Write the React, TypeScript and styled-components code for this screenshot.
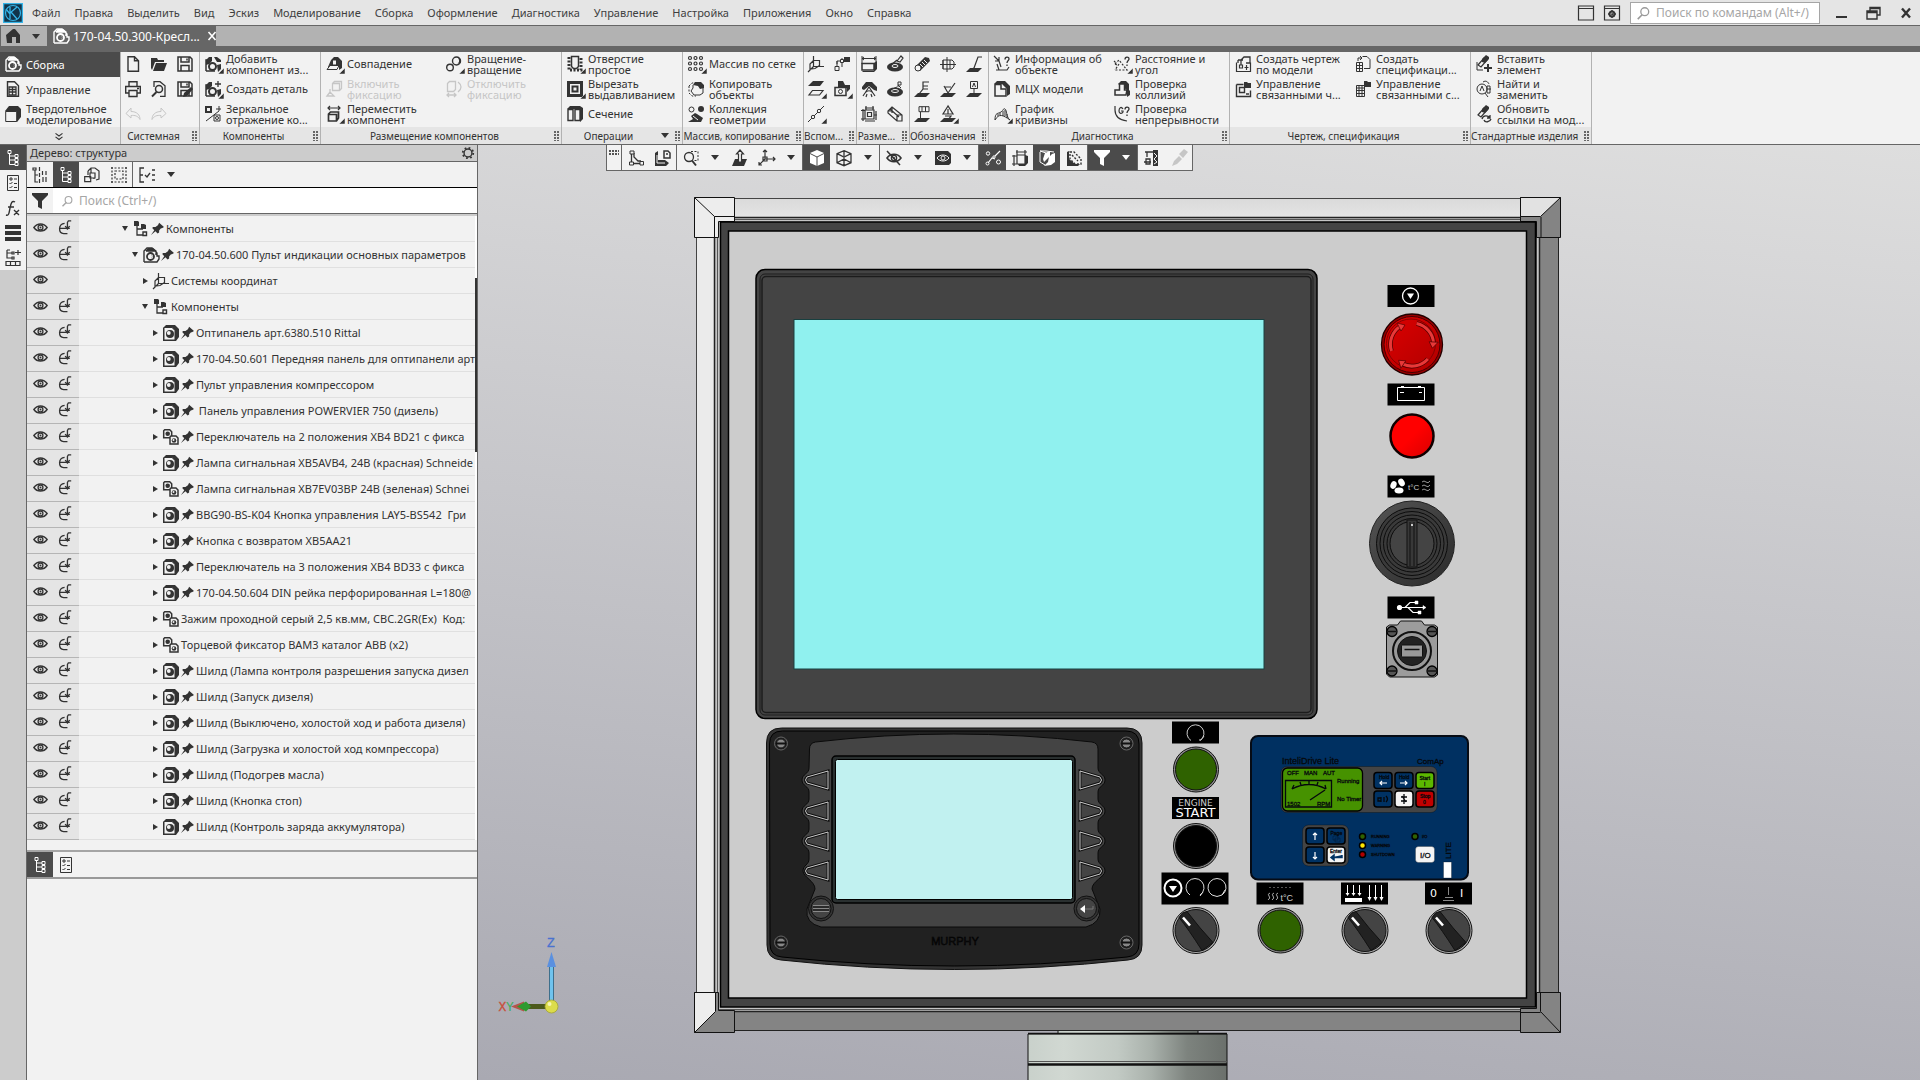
import React from "react";
import styled, { createGlobalStyle, css } from "styled-components";

const ink = "#333";
const line = "#666";
const face = "#f2f2f2";
const dark = "#4b4b4b";

const Global = createGlobalStyle`
  *, *::before, *::after { box-sizing: border-box; }
  body { margin: 0; overflow: hidden; }
  body, button, input { font-family: "Noto Sans", "Open Sans", sans-serif; font-size: 11px; color: ${ink}; }
  button { border: 0; padding: 0; background: none; cursor: pointer; }
  ul { list-style: none; margin: 0; padding: 0; }
  svg { display: block; flex: none; }
`;

/* ---------- icons, drawn on a 16 x 16 grid ---------- */

const F = { fill: "currentColor", stroke: "none" };
const W = { fill: "var(--bg, #f2f2f2)", stroke: "currentColor" };
const D = { strokeDasharray: "2 1.5" };
const plate = <path {...F} d="M4 12h12l-4 4H0z" />;
const partGlyph = (
  <>
    <path {...F} d="M0 3l3-3h9l4 4v8l-3 4H0z" />
    <path {...W} d="M1 2.500h8l3 3V15H1z" />
    <circle {...F} cx="7" cy="9" r="4" />
    <circle cx="5.800" cy="8" r="1.900" fill="var(--bg, #f2f2f2)" stroke="none" />
  </>
);
const asmGlyph = (
  <>
    <path d="M1 15V4l3-3h5l4 3v4M1 15h13l2-3v-3h-2V6l-2-2H3" strokeWidth="1.400" />
    <circle cx="7.500" cy="9.500" r="3.500" strokeWidth="1.800" />
    <path {...F} d="M8 7a3 3 0 0 1 0 5 4 4 0 0 0 0-5zM2 4l3-3h5l3 3z" />
  </>
);
const addGlyph = (
  <>
    <path d="M1 15V4h3M1 15h9" strokeWidth="1.500" />
    <path {...F} d="M1 4l3-3h3v4l-3 3-3 1zM12 9l4-1v5l-3 3z" />
    <circle cx="7.500" cy="10.500" r="3.500" strokeWidth="2" />
  </>
);
const treeGlyph = (
  <>
    <path d="M4.500 2v12.500H10M4.500 6H10M4.500 10H10" />
    <path {...W} d="M3 .5h3v3H3zM10 4.500h3v3h-3zM10 8.500h3v3h-3zM10 12.500h3v3h-3z" />
  </>
);
const listGlyph = (
  <>
    <path d="M2.500.5h11v15h-11z" />
    <path d="M5 3h2v2H5zM9 4h3M4.500 8l1 1 2-2M9 8.500h3M4.500 12l1 1 2-2M9 12.500h3" />
  </>
);
const eye = (
  <>
    <path d="M1 8c3.500-5 10.500-5 14 0-3.500 5-10.500 5-14 0z" strokeWidth="1.600" />
    <circle cx="8" cy="8" r="2.600" strokeWidth="1.400" />
    <circle {...F} cx="8" cy="8" r="1" />
  </>
);
const funnel = <path {...F} d="M0 0h16v2l-6 6v8l-4-2V8L0 2z" />;
const sheet = <path d="M7.500.5H12l3 3v9H9" />;
const table = <path d="M1.500 6.500h6v9h-6zM1.500 9.500h6M1.500 12.500h6M4.500 6.500v9" />;
const floppy = <path d="M1 1h12l2 2v12H1zM4 1v5h8V1M4 15V9.500h8V15M10 2.500v2" strokeWidth="1.500" />;
const undo = <path d="M6 2L1 7.500 6 12V9.500c4-.5 7 .5 9 4C15 9 12 5.500 6 5.500z" />;
const cone = (
  <>
    {plate}
    <path d="M6 13l2-1 4-11h4" strokeWidth="1.200" />
  </>
);
const q = <path d="M11 3.500C11 .5 15 .5 15 3c0 1.500-2 1.500-2 4M13 8.500v1.500" strokeWidth="1.300" />;
const bolt = (
  <>
    <path d="M2 9l6-7 3 2-6 7z" strokeWidth="1.200" />
    <path {...F} d="M6 3l4-4 3 2v2l-4 4-3-1z" />
  </>
);

const glyphs: Record<string, React.ReactNode> = {
  asm: asmGlyph,
  part: partGlyph,
  parts: (
    <>
      <path {...W} strokeWidth="1.500" d="M.7 1.700l1-1h5l2 2v6h-8z" />
      <circle {...F} cx="4.700" cy="4.700" r="2.300" />
      <path {...W} strokeWidth="1.500" d="M7 8l1-1h5l2 2v6H7z" />
      <circle {...F} cx="11" cy="11.500" r="2.300" />
      <circle cx="10.500" cy="11" r="1" fill="#f2f2f2" stroke="none" />
    </>
  ),
  doc: (
    <>
      <path d="M2.500.7h7l4 4v10.600h-11z" strokeWidth="1.400" />
      <path d="M4 6h7v8H4zM4 8.500h7M4 11h7M7.500 6v8" strokeWidth="1.300" />
    </>
  ),
  solid: (
    <>
      <path {...F} d="M0 5l4-5h9l3 3v8l-4 5z" />
      <path {...W} d="M.7 5.500h11v10H.7z" />
    </>
  ),
  newdoc: <path d="M3 .7h6.500l4 4v10.600H3zM9.500.7v4h4" strokeWidth="1.400" />,
  open: <path {...F} d="M0 2h6l1 2h6v2H4L1 14 0 12zM5 7h11l-3 8H2z" />,
  save: floppy,
  print: <path d="M4 5.500V.7h8v4.800M4 12H.7V5.500h14.600V12H12M4 9.500h8v6H4zM12 7.500h2" strokeWidth="1.400" />,
  preview: (
    <>
      <path d="M3 6V.7h6l5 4v10.600H9" strokeWidth="1.300" />
      <circle cx="8" cy="8" r="3.500" strokeWidth="1.500" />
      <path d="M5.500 11L1 15.500" strokeWidth="2" />
    </>
  ),
  saveas: (
    <>
      {floppy}
      <path {...F} d="M7 12l7-6 2 2-6 7-4 1z" />
    </>
  ),
  undo,
  redo: <g transform="matrix(-1 0 0 1 16 0)">{undo}</g>,
  add: (
    <>
      {addGlyph}
      <path {...F} d="M9 1h3l4 3v2h-4z" />
    </>
  ),
  create: (
    <>
      {addGlyph}
      <path d="M13 0v6M10 3h6" strokeWidth="1.300" />
    </>
  ),
  mirror: (
    <>
      <path d="M1 1h5v5H1z" strokeWidth="2" />
      <path d="M1 15L14 5M14 0v5M11 3h5M9 9h6v6H9z" />
      <circle cx="12" cy="12" r="1.500" />
    </>
  ),
  coincide: (
    <>
      <path {...F} d="M5 4l3-3h4l4 4v7l-3 2v-3H2z" />
      <path {...W} d="M1 13.500l3-4h9l-2 4zM6.500 4h4v5h-4z" />
    </>
  ),
  rotate: (
    <>
      <circle cx="10.500" cy="5" r="4" strokeWidth="1.400" />
      <circle cx="4" cy="11.500" r="3.300" strokeWidth="1.400" />
      <path {...F} d="M10.500 1a4 4 0 0 1 4 6l-3 1a4 4 0 0 0-1-7z" />
    </>
  ),
  fixon: <path d="M6.500 2.500l2-2h7v7l-2 2h-7zM6.500 2.500h7v7M4 8v4M1 15l3-4 4 4z" strokeWidth="1.300" />,
  fixoff: <path d="M1.500 2.500l2-2h6v8l-2 2h-6zM12 1c4 3 4 7 0 10M1 14h9M3 12l-2 2 2 2M8 12l2 2-2 2" strokeWidth="1.300" />,
  move: (
    <>
      <path d="M2 2h12M4 0L2 2l2 2M12 0l2 2-2 2" strokeWidth="1.200" />
      <path d="M2.500 8l2-2h8v6l-2 3h-8zM2.500 8.500h8V15" strokeWidth="1.700" />
    </>
  ),
  hole: (
    <>
      <path {...D} strokeWidth="3" d="M2 1v13h12V1" />
      <path {...W} d="M4.500.5h7v10l-2 2h-3l-2-2z" strokeWidth="1.500" />
    </>
  ),
  cut: (
    <>
      <path d="M1.500 1.500h13v13h-13z" strokeWidth="3" />
      <path d="M5.500 5.500h5v5h-5z" strokeWidth="2" />
    </>
  ),
  section: (
    <>
      <path {...F} d="M0 3l3-3h10l3 2v11l-3 3V3z" />
      <path {...W} strokeWidth="1.400" d="M1 3.500h5v11H1zM8 3.500h5v11H8z" />
    </>
  ),
  grid: (
    <g strokeWidth="1.200">
      {[2, 7.500, 13].flatMap((y) => [2, 7.500, 13].map((x) => <circle key={`${x}-${y}`} cx={x} cy={y} r="1.500" />))}
    </g>
  ),
  copy: (
    <>
      <path {...D} d="M1 5l3-3h7v3M1 5v7l3 3h4" />
      <path d="M5 4v3l-2 3 3 4h6l3-2V4" />
      <path {...F} d="M5 4l2-3h6l3 3v3l-4 1-2-3z" />
    </>
  ),
  collect: (
    <>
      <circle cx="3.500" cy="3.500" r="2.500" />
      <circle {...F} cx="13" cy="3" r="3" />
      <path {...F} d="M0 16l5-3-2-3 4-3 2 1 6 4-2 4z" />
      <path d="M5 10l5 4" stroke="#f2f2f2" />
    </>
  ),
  csys: <path d="M5.500 0v10.500H16M0 16l5.500-5.500M5.500 4.500h6v6M5.500 4.500L2 8v5l5-.5 4.500-3" strokeWidth="1.200" />,
  points: (
    <>
      <path d="M3 12V5h9M3 8V5M8 2v9" />
      <path {...F} d="M10 1h6v5h-6z" />
      <path {...W} d="M1 10.500h4v4H1zM6.500 3.500h3v3h-3z" />
    </>
  ),
  planes: (
    <>
      <path {...F} d="M5 0h11l-4 5H0z" />
      <path d="M4.500 9.500H15L11.500 14H1z" strokeWidth="1.200" />
    </>
  ),
  camera: (
    <>
      <path {...F} d="M4 0h5l2 4h5v4l-3 3V7H4z" />
      <path {...W} strokeWidth="1.500" d="M1 6.500h11v8H1z" />
      <circle cx="6.500" cy="10.500" r="2" />
    </>
  ),
  axis: (
    <>
      <path d="M0 16L16 0" />
      <circle {...W} cx="5" cy="11" r="1.700" />
      <circle {...W} cx="11" cy="5" r="1.700" />
    </>
  ),
  dimline: (
    <>
      <path d="M1 0v8M15 0v8M1 2.500h14M3 1L1 2.500 3 4M13 1l2 1.500L13 4" />
      <path {...W} strokeWidth="1.500" d="M1 7.500h12V14H1z" />
      <path {...F} d="M13 7l3-2v8l-3 3H2l-1-1h12z" />
    </>
  ),
  dimdia: (
    <>
      <ellipse {...F} cx="8" cy="11" rx="8" ry="4.500" />
      <ellipse cx="8" cy="10" rx="3" ry="1.500" stroke="#f2f2f2" />
      <path d="M4 9l6-5M10 5l4-5 2 2-3 4z" strokeWidth="1.200" />
    </>
  ),
  dimrad: (
    <>
      <ellipse {...F} cx="8" cy="11" rx="8" ry="4.500" />
      <ellipse cx="8" cy="10" rx="3.500" ry="1.500" stroke="#f2f2f2" />
      <path d="M3 9l7-3M11 6V1h3v3h-3l3 3" />
    </>
  ),
  dimang: (
    <>
      <path {...F} d="M1 6l4-5h6l5 5v4l-3-1-5-4-5 4-2-1z" />
      <path d="M8 6l-6 9M8 6l6 9M4 12c2-3 6-3 8 0M5 16l1-3M11 16l-1-3" strokeWidth="1.200" />
    </>
  ),
  dimall: <path d="M4 4h9v9H4zM6.500 6.500h4v4h-4zM0 4.500h4M0 13h4M2 3v12M5 0v4M12 0v4M4 2h9M15 5v9M13 9h3M4 15h10" strokeWidth="1.200" />,
  dimobl: <path d="M5 1l10 8v6h-5L1 7V5zM1 5h4M10 15V9h5M5 1v6M3 3l9 8" strokeWidth="1.200" />,
  thread: (
    <>
      <path {...F} d="M1 11L11 1l4 1 1 3L6 15l-4-1z" />
      <path d="M4 10l3 3M6 8l3 3M8 6l3 3M10 4l3 3" stroke="#f2f2f2" />
      <circle {...W} cx="4" cy="12" r="3" />
    </>
  ),
  cyl: <path d="M3 4h9l2 2v5l-2 2H3zM3 4v9M0 8.500h16M7 1v15M10 4v9" />,
  rough: cone,
  base: (
    <>
      {plate}
      <path d="M5 13l4-5V1h6M9 5h5M9 8h5" strokeWidth="1.200" />
    </>
  ),
  check: (
    <>
      {plate}
      <path d="M4 5l4 7 7-10M5 6h6" strokeWidth="1.200" />
    </>
  ),
  datum: (
    <>
      {plate}
      <path {...W} d="M4.500.5h7v7h-7z" />
      <path d="M6.500 6L8 2l1.500 4M8 8v5" />
    </>
  ),
  tol: (
    <>
      {plate}
      <path {...W} d="M5 .7h10v5H5zM8 .7v5M11.500.7v5M6.500 6v8" />
    </>
  ),
  weld: (
    <>
      {plate}
      <path d="M8 0L3 8h10zM8 3v5M5 10h6l-3 4" strokeWidth="1.200" />
    </>
  ),
  info: (
    <>
      {q}
      <path d="M0 0l5 5M5 1v4H1M3 8l2 6H2M3 14h10l2-3M5 5l2 6" strokeWidth="1.200" />
    </>
  ),
  mass: (
    <>
      <path {...F} d="M0 3l3-3h8l5 5v8l-3 2V8L8 3z" />
      <path {...W} strokeWidth="1.500" d="M1 3.500h6V8h5v7H1z" />
    </>
  ),
  curve: (
    <>
      <path d="M1 14C1 6 4 8 7 6s2-4 4-3 1 8 5 11M1 14c4-7 8-5 15 0M4 8v2M6 7v2M9 5v5M11 4v6M13 8v4" />
    </>
  ),
  dist: (
    <>
      {q}
      <path d="M1 8l4-4 8 10H1M5 8l-4 6M1 8l2 1M0 5l2 2" {...D} strokeWidth="1.200" />
    </>
  ),
  collide: (
    <>
      <path {...F} d="M4 3l3-3h5l3 3v6l1 1v4l-3 2V9z" />
      <path {...W} strokeWidth="1.500" d="M5.500 3h5v6h2.500l-1 5H1V9h4.500z" />
    </>
  ),
  cont: (
    <>
      {q}
      <path d="M1 0v4c0 6 4 10 12 11M9 3C7 0 5 2 5 5s3 3 4 1V5H7" strokeWidth="1.200" />
    </>
  ),
  draw: (
    <>
      <path d="M1.500 6.500v9h14v-9M4.500 9h3v3h-3zM9.500 11.500h4M11.500 9v5" strokeWidth="1.200" />
      <path d="M6 9V4l3-3h6v6h-4M3 4h5M3 4v3" strokeWidth="1.300" />
    </>
  ),
  drawm: (
    <>
      <path d="M1.500 3.500v12h14v-6M1.500 3.500h7M4.500 6.500h5v5h-5zM11 13h3" strokeWidth="1.400" />
      <path {...F} d="M9 1h3l1 1h3v5H9z" />
    </>
  ),
  spec: (
    <>
      {table}
      {sheet}
      <path d="M3 5V2h4M5 0l2 2-2 2" />
    </>
  ),
  specm: (
    <>
      <path d="M1.500 4.500h8v11h-8zM1.500 7h8M1.500 9.500h8M1.500 12.500h8M4 4.500v11M7 4.500v11" />
      <path {...F} d="M9 0h3l1 1h3v5H9z" />
    </>
  ),
  insert: (
    <>
      {bolt}
      <path d="M12 8v8M8 12h8" strokeWidth="2" />
      <path d="M1 6v8h6" />
    </>
  ),
  find: (
    <>
      <circle cx="6" cy="8" r="5" />
      <path d="M4 10l2-5 2 5M11 12V5h3v7h-3M11 8h4M9 12l3 4M7 1c3-2 5 0 6 2" />
    </>
  ),
  update: (
    <>
      {bolt}
      <path d="M6 13c1-4 6-4 8-1M14 9v3h-3M15 13c-1 3-6 4-7 1" strokeWidth="1.300" />
    </>
  ),
  tree: treeGlyph,
  list: listGlyph,
  menu: <path {...F} d="M0 0h16v4H0zM0 6h16v4H0zM0 12h16v4H0z" />,
  treeadd: <path d="M2 0v8h5M2 3h5M2 0h3M7 2h2v2H7zM7 7h2v2H7zM13 0v5M10 2.500h6M1 11.500h14v4H1zM5.500 11.500v4M10.500 11.500v4" strokeWidth="1.200" />,
  numtree: <path d="M3 3v12h3M3 8h3M1 1h3v2H1zM7.500 0v4M10.500 4v4M14 4v4M7.500 6v4M11 10v5M14 10v5M7.500 12v4" strokeWidth="1.200" />,
  clips: (
    <>
      <path d="M4 4l3-3h4l4 3v8l-3 1M4 4v4M7 1v5l3 2v4" strokeWidth="1.200" />
      <path {...W} strokeWidth="1.200" d="M.7 9.700h6v5h-6zM6 6h5v5H6z" />
    </>
  ),
  marquee: (
    <>
      <path {...D} strokeWidth="1.200" d="M0 1h16M0 15h16M1 0v16M15 0v16M4 4h8v8H4z" />
    </>
  ),
  checks: <path d="M4 1H1v14h3M1 8h3M6 8l2 2 3-4M13 3h3M13 8h3M13 13h3M4 1h1M4 15h1" strokeWidth="1.300" />,
  include: <path d="M6 3.500C-1 4-1 14 5 14.500h4M1 9h10.500M9 10.500V6M6.500 6.500L9 9l2.500-2.500M9 6V2.500L10 1h3" strokeWidth="1.400" />,
  eye,
  comps: (
    <>
      <path d="M4 4v10h6M4 8h6" strokeWidth="1.300" />
      <path {...F} d="M1 0h4l1 1v4H1zM8 3h3l2 1v4H8z" />
      <path {...W} strokeWidth="1.400" d="M10 11h3.500v3.500H10z" />
    </>
  ),
  pin: <path {...F} d="M10 1l6 5-2 1.500-2 .5-2 2.500 0 2.500-2 1-2.500-2.500L0 16l4-6-2.500-2.500 1-1.500h3L8.500 4z" />,
  ucs: (
    <>
      <path d="M3.500 3v10.500H13M6 3v4l4 4h3" strokeWidth="1.300" />
      <path {...W} d="M2 1h4v3H2zM1.500 12h4v3h-4zM12 11.500h3.500V15H12z" />
    </>
  ),
  ucspart: (
    <>
      <path {...F} d="M0 3l3-2v9h7l4 3-3 3H0z" />
      <path d="M9 1h4l2 2v5H9zM11 4h2" strokeWidth="1.500" />
      <path d="M2 5v8h8" stroke="#f2f2f2" />
    </>
  ),
  zoom: (
    <>
      <circle cx="6" cy="7" r="4.500" strokeWidth="1.300" />
      <path d="M9 10.500l4 5" strokeWidth="2" />
      <path {...D} d="M8 1.500h7v9h-4" />
    </>
  ),
  normal: (
    <>
      <path {...F} d="M3 9h12l-3 7H0z" />
      <path {...W} strokeWidth="1.200" d="M8 0l3.500 4h-2v8h-3V4h-2z" />
    </>
  ),
  triad: <path d="M6 0v9h10M6 9l-6 6M4 2l2-2 2 2M14 7l2 2-2 2M0 12v3h3M4 7h4v4H4z" strokeWidth="1.200" />,
  cube: (
    <>
      <path {...F} d="M8 0l7 3v10l-7 3-7-3V3z" />
      <path d="M1 3.500L8 7l7-3.500M8 7v9" stroke="#4b4b4b" />
    </>
  ),
  wire: <path d="M8 .7l7 3v9l-7 3-7-3v-9zM1 3.700L8 7l7-3.300M8 7v8.700M8 .7V6M1 12.700L8 9l7 3.700" strokeWidth="1.300" />,
  hide: (
    <>
      {eye}
      <path d="M1 1l13 14" strokeWidth="1.500" />
    </>
  ),
  eyebox: (
    <>
      <path {...F} d="M0 1h13l3 3v9l-2 2H0z" />
      <path d="M2 8c3-4 9-4 12 0-3 4-9 4-12 0z" stroke="#f2f2f2" />
      <circle cx="8" cy="8" r="2" stroke="#f2f2f2" />
    </>
  ),
  snaps: (
    <>
      <path d="M3 13l4-5 3 1M10 6l5-5" strokeWidth="1.200" />
      <circle cx="3" cy="3.500" r="1.700" />
      <circle cx="9" cy="7" r="1.200" />
      <circle cx="13.500" cy="12" r="2" />
      <circle cx="2.500" cy="13.500" r="1.500" />
    </>
  ),
  dimshow: (
    <>
      <path d="M5 5h8v9H5zM5 0v5M13 0v5M4 2h11M0 6h5M0 14h5M2 5v11" strokeWidth="1.200" />
      <path {...F} d="M13 5l3 1v7l-3 3H7l-1-2h7z" />
    </>
  ),
  shade: (
    <>
      <path {...F} d="M6 3l5-2v5l-6 6-1-3zM10 7l3-3 3-1v9l-4 3-7 1 4-4z" />
      <path d="M1 2v10l5 3M1 1l6 2M1 1h6l8 1" />
    </>
  ),
  shaded: (
    <>
      <path {...F} d="M1 2l2-1v8l6 5h5l-2 2H1z" />
      <path {...D} strokeWidth="1.400" d="M4 2h4l7 7v5H9L4 9zM6 5l6 6" />
    </>
  ),
  funnel,
  crane: (
    <>
      <path d="M1 2h9M3 2v5M2 9h4v5H2zM0 12h7" strokeWidth="1.300" />
      <path {...F} d="M9 0h5v16h-5z" />
      <path d="M10 3l3 3-3 3 3 3-3 2" stroke="#f2f2f2" />
    </>
  ),
  picker: <path {...F} d="M1 16l2-5 5-5 3 3-5 5zM8 4l5-5 4 3-5 6z" />,
  home: <path {...F} d="M0 7l7-6h2l5 6v8h-4V9H6v6H1z" />,
  win: <path d="M.5 1h15v14H.5zM.5 3.500h15" strokeWidth="1.200" />,
  wingear: (
    <>
      <path d="M.5 1h15v14H.5zM.5 3.500h15" strokeWidth="1.200" />
      <circle cx="8" cy="9" r="2.500" strokeWidth="2" />
      <path {...D} strokeWidth="1.500" d="M8 5v8M4 9h8" />
    </>
  ),
  gear: (
    <>
      <circle cx="8" cy="8" r="4.500" strokeWidth="1.600" />
      <circle cx="8" cy="8" r="6" strokeWidth="2" strokeDasharray="2 2.710" />
    </>
  ),
  search: (
    <>
      <circle cx="10" cy="6.500" r="4.500" strokeWidth="1.500" />
      <path d="M7 10l-5 5" strokeWidth="1.800" />
    </>
  ),
  more: <path d="M4 5l4 3 4-3M4 9l4 3 4-3" strokeWidth="1.300" />,
  minus: <path {...F} d="M2 11h11v2H2z" />,
  restore: <path d="M1 6h10v8H1zM1 7.500h10M4 6V2.500h10V10h-3M4 3.500h10" strokeWidth="1.400" />,
  close: <path d="M4 3.500l8 9M12 3.500l-8 9" strokeWidth="2.400" />,
  closetab: <path d="M4.500 4l7 8M11.500 4l-7 8" strokeWidth="1.600" />,
  fx: <path d="M1 15c3 1 3-2 4-7s2-8 5-6M3 7h6M9 10l5 5M14 10l-5 5" strokeWidth="1.400" />,
};

const Icon = ({ name, size = 16 }: { name: string; size?: number }) => (
  <svg width={size} height={size} viewBox="0 0 16 16" fill="none" stroke="currentColor" overflow="visible" aria-hidden>
    {glyphs[name]}
  </svg>
);

const ToolIcon = ({ name, more }: { name: string; more?: boolean }) => (
  <svg width={20} height={20} viewBox="0 0 20 20" fill="none" stroke="currentColor" aria-hidden>
    <g transform="translate(1 2)">{glyphs[name]}</g>
    {more && <path d="M20 14v6h-6z" fill="currentColor" stroke="#f2f2f2" strokeWidth=".5" />}
  </svg>
);

/* ---------- frame ---------- */

const Shell = styled.div`
  height: 100vh;
  display: flex;
  flex-direction: column;
  background: ${face};
`;

const MenuBar = styled.header`
  flex: none;
  height: 26px;
  display: flex;
  align-items: center;
  background: #e5e5e5;
  border-bottom: 1px solid ${line};
`;
const Menu = styled.nav`
  display: flex;
  gap: 14px;
  padding-left: 9px;
  button { color: #404040; white-space: nowrap; }
`;
const Logo = styled.svg`margin-left: 3px;`;
const Spacer = styled.div`flex: 1;`;
const WinTools = styled.div`
  display: flex;
  gap: 10px;
  margin-right: 10px;
`;
const CommandSearch = styled.label`
  width: 190px;
  height: 22px;
  display: flex;
  align-items: center;
  gap: 6px;
  padding-left: 5px;
  background: #fff;
  border: 1px solid #a5a5a5;
  color: #999;
`;
const SearchInput = styled.input`
  flex: 1;
  min-width: 0;
  border: 0;
  padding: 0;
  outline: 0;
  background: none;
  font-size: 12px;
  &::placeholder { color: #a6a6a6; opacity: 1; }
`;
const WinButtons = styled.div`
  display: flex;
  gap: 16px;
  padding: 0 6px 0 14px;
`;

const TabBar = styled.div`
  flex: none;
  height: 26px;
  display: flex;
  background: #b2b2b2;
  border-bottom: 6px solid ${line};
  border-left: 1px solid ${line};
`;
const HomeTab = styled.button`
  width: 46px;
  display: flex;
  align-items: center;
  gap: 10px;
  padding-left: 5px;
`;
const DocTab = styled.div`
  width: 169px;
  display: flex;
  align-items: center;
  gap: 4px;
  padding: 0 3px 0 6px;
  background: ${line};
  color: #fff;
  font-size: 12px;
  white-space: nowrap;
  button { color: #fff; margin-left: auto; }
`;
const Caret = styled.span`
  flex: none;
  width: 0;
  height: 0;
  border: 4px solid transparent;
  border-top: 5px solid currentColor;
  border-bottom: 0;
`;

/* ---------- ribbon ---------- */

const Ribbon = styled.div`
  flex: none;
  display: flex;
  background: ${face};
  border-bottom: 1px solid ${line};
`;
const Group = styled.section<{ $w: number }>`
  flex: 0 0 ${(p) => p.$w}px;
  min-width: 0;
  display: flex;
  flex-direction: column;
  border-right: 1px solid #b2b2b2;
`;
const GroupBody = styled.div<{ $col: number; $pad: number }>`
  display: grid;
  grid-template-rows: repeat(3, 25px);
  grid-auto-flow: column;
  grid-auto-columns: ${(p) => p.$col}px;
  padding-left: ${(p) => p.$pad}px;
`;
const GroupFoot = styled.footer`
  height: 17px;
  display: flex;
  align-items: center;
  justify-content: center;
  gap: 6px;
  padding-right: 2px;
  background: #e5e5e5;
  font-size: 10px;
  line-height: 16px;
  white-space: nowrap;
  > span:first-child { flex: 1; text-align: center; }
`;
const Grip = styled.i`
  width: 5px;
  height: 10px;
  background: radial-gradient(circle at 1px 1px, #666 1px, transparent 1px) 0 0 / 3px 3px;
`;
const Command = styled.button<{ $bare: boolean }>`
  display: flex;
  align-items: center;
  justify-content: ${(p) => (p.$bare ? "center" : "flex-start")};
  gap: 2px;
  padding-bottom: 2px;
  text-align: left;
  line-height: 11px;
  white-space: pre;
  &:disabled { color: #c6c6c6; cursor: default; }
`;
const ModeButton = styled.button<{ $on?: boolean }>`
  display: flex;
  align-items: center;
  gap: 5px;
  padding: 0 0 1px 5px;
  text-align: left;
  line-height: 11px;
  white-space: pre;
  ${(p) => p.$on && css`background: ${dark}; color: #fff; --bg: ${dark};`}
`;

type Cmd = [icon: string, text: string, flags?: string];
interface GroupDef { title: string; w: number; col: number; pad: number; cmds: Cmd[]; caret?: boolean }

const groups: GroupDef[] = [
  { title: "Системная", w: 79, col: 26, pad: 0, cmds: [
    ["newdoc", ""], ["print", ""], ["undo", "", "d"], ["open", ""], ["preview", ""], ["redo", "", "d"], ["save", ""], ["saveas", ""]] },
  { title: "Компоненты", w: 121, col: 116, pad: 4, cmds: [
    ["add", "Добавить\nкомпонент из...", "m"], ["create", "Создать деталь", "m"], ["mirror", "Зеркальное\nотражение ко..."]] },
  { title: "Размещение компонентов", w: 241, col: 120, pad: 4, cmds: [
    ["coincide", "Совпадение", "m"], ["fixon", "Включить\nфиксацию", "d"], ["move", "Переместить\nкомпонент", "m"],
    ["rotate", "Вращение-\nвращение", "m"], ["fixoff", "Отключить\nфиксацию", "d"]] },
  { title: "Операции", w: 121, col: 116, pad: 4, caret: true, cmds: [
    ["hole", "Отверстие\nпростое", "m"], ["cut", "Вырезать\nвыдавливанием", "m"], ["section", "Сечение"]] },
  { title: "Массив, копирование", w: 121, col: 116, pad: 4, cmds: [
    ["grid", "Массив по сетке", "m"], ["copy", "Копировать\nобъекты"], ["collect", "Коллекция\nгеометрии"]] },
  { title: "Вспом...", w: 53, col: 26, pad: 0, cmds: [
    ["csys", ""], ["planes", "", "m"], ["axis", "", "m"], ["points", ""], ["camera", "", "m"]] },
  { title: "Разме...", w: 53, col: 26, pad: 0, cmds: [
    ["dimline", ""], ["dimang", ""], ["dimall", ""], ["dimdia", ""], ["dimrad", ""], ["dimobl", ""]] },
  { title: "Обозначения", w: 79, col: 26, pad: 0, cmds: [
    ["thread", ""], ["base", ""], ["tol", ""], ["cyl", ""], ["check", ""], ["weld", "", "m"], ["rough", ""], ["datum", ""]] },
  { title: "Диагностика", w: 241, col: 120, pad: 4, cmds: [
    ["info", "Информация об\nобъекте"], ["mass", "МЦХ модели"], ["curve", "График\nкривизны", "m"],
    ["dist", "Расстояние и\nугол", "m"], ["collide", "Проверка\nколлизий"], ["cont", "Проверка\nнепрерывности"]] },
  { title: "Чертеж, спецификация", w: 241, col: 120, pad: 4, cmds: [
    ["draw", "Создать чертеж\nпо модели"], ["drawm", "Управление\nсвязанными ч..."], ["", ""],
    ["spec", "Создать\nспецификаци..."], ["specm", "Управление\nсвязанными с..."]] },
  { title: "Стандартные изделия", w: 121, col: 116, pad: 4, cmds: [
    ["insert", "Вставить\nэлемент"], ["find", "Найти и\nзаменить"], ["update", "Обновить\nссылки на мод..."]] },
];

const RibbonGroup = ({ g }: { g: GroupDef }) => (
  <Group $w={g.w} aria-label={g.title}>
    <GroupBody $col={g.col} $pad={g.pad}>
      {g.cmds.map(([icon, text, flags = ""], i) =>
        icon ? (
          <Command key={i} $bare={!text} disabled={flags.includes("d")} aria-label={text ? undefined : icon}>
            <ToolIcon name={icon} more={flags.includes("m")} />
            {text && <span>{text}</span>}
          </Command>
        ) : (
          <span key={i} />
        )
      )}
    </GroupBody>
    <GroupFoot>
      <span>{g.title}</span>
      {g.caret && <Caret />}
      <Grip />
    </GroupFoot>
  </Group>
);

/* ---------- side panel ---------- */

const Main = styled.main`
  flex: 1;
  min-height: 0;
  display: flex;
`;
const Rail = styled.nav`
  flex: 0 0 26px;
  background: #ccc;
`;
const Square = styled.button<{ $on?: boolean; $w?: number }>`
  width: ${(p) => p.$w ?? 26}px;
  height: 25px;
  display: flex;
  align-items: center;
  justify-content: center;
  background: ${(p) => (p.$on ? dark : face)};
  color: ${(p) => (p.$on ? "#fff" : ink)};
  --bg: ${(p) => (p.$on ? dark : face)};
  &:disabled { color: #c6c6c6; }
`;
const Panel = styled.aside`
  flex: 0 0 452px;
  min-width: 0;
  display: flex;
  flex-direction: column;
  border: solid ${line};
  border-width: 0 1px;
  background: ${face};
`;
const PanelHead = styled.div`
  height: 17px;
  display: flex;
  align-items: center;
  justify-content: space-between;
  padding: 0 2px 0 3px;
  background: #ccc;
  border-bottom: 1px solid ${line};
  line-height: 16px;
`;
const PanelTools = styled.div`
  height: 26px;
  display: flex;
  border-bottom: 1px solid #000;
  > :nth-child(5) { border-left: 1px solid ${line}; }
`;
const CaretCell = styled.button`
  width: 22px;
  display: flex;
  align-items: center;
  justify-content: center;
`;
const FilterRow = styled.div`
  height: 26px;
  display: flex;
  border-bottom: 1px solid ${line};
`;
const FilterInput = styled.label`
  flex: 1;
  display: flex;
  align-items: center;
  gap: 6px;
  padding-left: 8px;
  background: #fff;
  color: #a6a6a6;
`;
const TreeWrap = styled.div`
  display: flex;
  border-top: 2px solid #ccc;
`;
const Tree = styled.ul`
  flex: 1;
  min-width: 0;
`;
const Row = styled.li`
  height: 26px;
  display: flex;
`;
const Mark = styled.button`
  flex: 0 0 26px;
  display: flex;
  justify-content: center;
  padding-top: 4px;
  background: #e5e5e5;
  border-bottom: 1px solid #b5b5b5;
`;
const Node = styled.div<{ $level: number }>`
  flex: 1;
  min-width: 0;
  display: flex;
  align-items: center;
  gap: 2px;
  padding-left: ${(p) => 40 + p.$level * 10}px;
  border-bottom: 1px solid #e0e0e0;
  white-space: pre;
  overflow: hidden;
`;
const Twist = styled.button<{ $open?: boolean }>`
  flex: none;
  width: 12px;
  height: 16px;
  display: flex;
  align-items: center;
  justify-content: center;
  &::before {
    content: "";
    border: 3px solid transparent;
    ${(p) => (p.$open
      ? css`border-top: 5px solid ${ink}; border-bottom: 0;`
      : css`border-left: 5px solid ${ink}; border-right: 0;`)}
  }
`;
const Pin = styled.span`width: 13px;`;
const Scroll = styled.div`
  flex: 0 0 2px;
  padding-top: 62px;
  background: #fff;
  &::before { content: ""; display: block; height: 174px; background: ${ink}; }
`;
const Switcher = styled.div`
  margin-top: 10px;
  display: flex;
  border-top: 2px solid #a5a5a5;
  border-bottom: 2px solid #999;
`;

type TreeItem = [level: number, icon: string, pin: boolean, text: string, open?: boolean, noMark?: boolean];
const P = "part";
const tree: TreeItem[] = [
  [0, "comps", true, "Компоненты", true],
  [1, "asm", true, "170-04.50.600 Пульт индикации основных параметров", true],
  [2, "csys", false, "Системы координат", false, true],
  [2, "comps", false, "Компоненты", true],
  [3, P, true, "Оптипанель арт.6380.510 Rittal"],
  [3, P, true, "170-04.50.601 Передняя панель для оптипанели арт"],
  [3, P, true, "Пульт управления компрессором"],
  [3, P, true, " Панель управления POWERVIER 750 (дизель)"],
  [3, "parts", true, "Переключатель на 2 положения XB4 BD21 с фикса"],
  [3, P, true, "Лампа сигнальная XB5AVB4, 24В (красная) Schneide"],
  [3, "parts", true, "Лампа сигнальная XB7EV03BP 24В (зеленая) Schnei"],
  [3, P, true, "BBG90-BS-K04 Кнопка управления LAY5-BS542  Гри"],
  [3, P, true, "Кнопка с возвратом XB5AA21"],
  [3, P, true, "Переключатель на 3 положения XB4 BD33 с фикса"],
  [3, P, true, "170-04.50.604 DIN рейка перфорированная L=180@"],
  [3, "parts", false, "Зажим проходной серый 2,5 кв.мм, CBC.2GR(Ex)  Код:"],
  [3, "parts", false, "Торцевой фиксатор BAM3 каталог ABB (x2)"],
  [3, P, true, "Шилд (Лампа контроля разрешения запуска дизел"],
  [3, P, true, "Шилд (Запуск дизеля)"],
  [3, P, true, "Шилд (Выключено, холостой ход и работа дизеля)"],
  [3, P, true, "Шилд (Загрузка и холостой ход компрессора)"],
  [3, P, true, "Шилд (Подогрев масла)"],
  [3, P, true, "Шилд (Кнопка стоп)"],
  [3, P, true, "Шилд (Контроль заряда аккумулятора)"],
];

/* ---------- viewport ---------- */

const Viewport = styled.div`
  flex: 1;
  min-width: 0;
  position: relative;
  background: linear-gradient(186deg, #dedede, #a9a9b2);
`;
const Canvas = styled.svg`
  position: absolute;
  inset: 0;
  width: 100%;
  height: 100%;
`;
const ViewBar = styled.div`
  position: absolute;
  top: 0;
  left: 128px;
  height: 26px;
  display: flex;
  background: ${face};
  border: 1px solid ${line};
  border-top: 0;
`;
const ViewGroup = styled.div`
  display: flex;
  border-right: 1px solid ${line};
  &:last-child { border-right: 0; }
`;
const Handle = styled.span`
  width: 15px;
  padding: 5px 2px;
  border-right: 1px solid ${line};
  &::before {
    content: "";
    display: block;
    height: 6px;
    background: radial-gradient(circle at 1px 1px, #555 1px, transparent 1px) 0 0 / 3px 3px;
  }
`;
const DarkCaret = styled(CaretCell)`background: ${dark}; color: #fff;`;

const viewTools: string[][] = [
  ["ucs", "ucspart"],
  ["zoom", "v", "normal", "triad", "v"],
  ["*cube", "wire", "v"],
  ["hide", "v", "eyebox", "v"],
  ["*snaps", "dimshow", "*shade", "shaded"],
  ["*funnel", "V"],
  ["crane", "-picker"],
];

/* ---------- model ---------- */

const K = { stroke: "#111", strokeWidth: 1 };

const Knob = ({ x, y }: { x: number; y: number }) => (
  <g transform={`translate(${x} ${y})`}>
    <circle r="23" fill="#aaa" {...K} />
    <circle r="21" fill="#444" {...K} />
    <path d="M-17-13Q-8-2 6 20L17 12Q4-2-9-19Q-14-19-17-13z" fill="#222" {...K} />
    <path d="M-13-13L-6-5" stroke="#fff" strokeWidth="2.500" />
  </g>
);
const Lamp = ({ x, y, fill }: { x: number; y: number; fill: string }) => (
  <g>
    <circle cx={x} cy={y} r="22.500" fill="#8f8f8f" {...K} />
    <circle cx={x} cy={y} r="20.500" fill={fill} {...K} />
  </g>
);
const Plate = ({ x, y, w = 47, h = 22 }: { x: number; y: number; w?: number; h?: number }) => (
  <rect x={x} y={y} width={w} height={h} fill="#000" />
);
const Screw = ({ x, y }: { x: number; y: number }) => (
  <g transform={`translate(${x} ${y})`}>
    <circle r="6.500" fill="#222" stroke="#666" />
    <circle r="4.500" fill="#888" stroke="#111" />
    <path d="M-5 0H5" stroke="#111" strokeWidth="2" />
  </g>
);
const Key = ({ x, y, fill = "#003264", children }: { x: number; y: number; fill?: string; children?: React.ReactNode }) => (
  <g transform={`translate(${x} ${y})`}>
    <rect width="18" height="16" rx="3" fill={fill} stroke="#000" strokeWidth="1.500" />
    {children}
  </g>
);

const sans = '"Liberation Sans", Arial, sans-serif';
const wide = '"DejaVu Sans", Verdana, sans-serif';
const arrow = <path d="M6 10.500h7M8 8.500l-2 2 2 2" stroke="#fff" fill="none" strokeWidth="1.200" />;

const Model = () => (
  <Canvas viewBox="478 145 1442 935" preserveAspectRatio="xMidYMid slice" role="img" aria-label="170-04.50.300">
    <defs>
      <linearGradient id="cyl">
        <stop offset="0" stopColor="#c9d1cb" />
        <stop offset=".18" stopColor="#d1d8d2" />
        <stop offset=".45" stopColor="#c2cac4" />
        <stop offset=".62" stopColor="#a9b1ab" />
        <stop offset=".8" stopColor="#7d837e" />
        <stop offset="1" stopColor="#6b706c" />
      </linearGradient>
      <linearGradient id="beam" x2="0" y2="1">
        <stop offset="0" stopColor="#dadada" />
        <stop offset=".04" stopColor="#ebebeb" />
      </linearGradient>
      <linearGradient id="stop" x2="1" y2="1">
        <stop offset="0" stopColor="#d00" />
        <stop offset="1" stopColor="#b00000" />
      </linearGradient>
      <linearGradient id="knob" x2="1" y2="1">
        <stop offset="0" stopColor="#555" />
        <stop offset="1" stopColor="#2a2a2a" />
      </linearGradient>
      <linearGradient id="lamp" x2="1" y2="1">
        <stop offset=".5" stopColor="#f00" />
        <stop offset="1" stopColor="#d80000" />
      </linearGradient>
    </defs>

    {/* pedestal */}
    <path d="M1058 1030h140v4h-140z" fill="url(#cyl)" {...K} />
    <path d="M1028 1034h199v50h-199z" fill="url(#cyl)" {...K} />
    <path d="M1028 1033.500h199" stroke="#111" strokeWidth="1.500" />
    <path d="M1028 1061.500h199" stroke="#555" />
    <path d="M1028 1064.500h199" stroke="#111" strokeWidth="2.500" />

    {/* enclosure profile */}
    <path d="M696.500 198.500h862v832h-862z" fill="#848484" stroke="#222" />
    <path d="M696.500 198.500h862l-22 23H718v789l-21.500 20z" fill="url(#beam)" stroke="#444" />
    <path d="M714.500 217.500h825v794h-825z" fill="#c4c4c4" stroke="#222" strokeWidth="1.500" />
    <path d="M717.500 219.500h819v790h-819z" fill="none" stroke="#555" />
    <g {...K}>
      <path d="M694.500 197.500h40v24h-16v16h-24z" fill="#ededed" />
      <path d="M694.500 197.500l20 19h20M714.500 216.500v21" fill="none" />
      <path d="M1520.500 197.500h40v40h-24v-16h-16z" fill="#848484" />
      <path d="M1520.500 197.500h40l-20 19h-20z" fill="#e2e2e2" />
      <path d="M1541 217v20" />
      <path d="M694.500 992.500h24v18h16v22h-40z" fill="#848484" />
      <path d="M694.500 992.500h21v19l-21 21z" fill="#ededed" />
      <path d="M1520.500 1032.500v-24h16v-16h24v40z" fill="#848484" />
      <path d="M1540.500 992.500v19l20 21M1520.500 1012.500h20" fill="none" />
    </g>

    {/* door */}
    <path d="M720.500 222h815v785h-815z" fill="#444" stroke="#000" strokeWidth="1.500" />
    <path d="M728.500 231h798v767h-798z" fill="#ccc" stroke="#000" strokeWidth="1.500" />

    {/* monitor */}
    <rect x="756" y="269.500" width="561" height="449" rx="9" fill="#444" stroke="#000" strokeWidth="1.500" />
    <rect x="760" y="274" width="553" height="441" rx="5" fill="none" stroke="#1c1c1c" />
    <rect x="762" y="276.500" width="549" height="436" rx="4" fill="none" stroke="#1c1c1c" strokeWidth="1.500" />
    <rect x="794" y="319.500" width="470" height="349.500" fill="#90f1ef" stroke="#184040" />

    {/* engine controller */}
    <path d="M766.500 743q0-15 15-15H1127q15 0 15 15V945q0 14-14 15Q954 979 781 960q-14-1-14-15z" fill="#333" {...K} />
    <path d="M769.500 744q0-13 13-13H1126q13 0 13 13V944q0 12-12 13Q954 975 782 957q-12-1-12-13z" fill="#212121" stroke="#000" />
    <path
      d="M809.500 749q0-6 6-7Q954 726 1092 742q6 1 6 7V768c0 6 7 6 7 12s-7 6-7 12v7c0 6 7 6 7 12s-7 6-7 12v6c0 6 7 6 7 12s-7 6-7 12v6c0 6 7 6 7 12s-13 10-13 18l8 20q1 14-14 18H821q-16-4-14-18l8-20c0-8-12-12-12-18s6-6 6-12v-6c0-6-7-6-7-12s7-6 7-12v-6c0-6-7-6-7-12s7-6 7-12v-7c0-6-7-6-7-12s7-6 7-12z"
      fill="#444" stroke="#0a0a0a"
    />
    <rect x="832" y="756" width="243" height="147" rx="4" fill="#2a3030" stroke="#000" strokeWidth="1.500" />
    <rect x="835.500" y="759.500" width="237" height="140" rx="2" fill="#c1f1f0" stroke="#000" />
    {[780, 811, 841, 871].map((y) => (
      <g key={y} fill="none">
        <path d={`M828 ${y - 9}v18L807 ${y + 3}q-3-3 0-6z`} stroke="#111" strokeWidth="3" />
        <path d={`M828 ${y - 9}v18L807 ${y + 3}q-3-3 0-6z`} stroke="#ccc" />
        <path d={`M1080 ${y - 9}v18L1100 ${y + 3}q3-3 0-6z`} stroke="#111" strokeWidth="3" />
        <path d={`M1080 ${y - 9}v18L1100 ${y + 3}q3-3 0-6z`} stroke="#ccc" />
      </g>
    ))}
    {[821, 1086.500].map((x) => (
      <g key={x} fill="#333" {...K}>
        <circle cx={x} cy="908.500" r="12.500" />
        <circle cx={x} cy="908.500" r="10" fill="#444" />
      </g>
    ))}
    <path d="M813 905.500h16M813 908.500h16M813 911.500h16" stroke="#888" />
    <path d="M813 907h16M813 910h16" stroke="#111" />
    <path d="M1080 909l5-4v8z" fill="#fff" />
    <path d="M1085 909h8v-3" fill="none" stroke="#777" />
    <Screw x={781} y={743.500} />
    <Screw x={1126.500} y={743.500} />
    <Screw x={781} y={942.500} />
    <Screw x={1126.500} y={942.500} />
    <text x="955" y="945" textAnchor="middle" fontFamily={sans} fontSize="11" fill="#111" stroke="#000" strokeWidth=".5">MURPHY</text>

    {/* right column */}
    <Plate x={1387.500} y={285} />
    <circle cx="1410.500" cy="296" r="8" fill="none" stroke="#fff" strokeWidth="1.300" />
    <path d="M1407 293.500h7l-3.500 5.500z" fill="#fff" />
    <circle cx="1412" cy="344.500" r="30.500" fill="#900" stroke="#200" strokeWidth="1.300" />
    <circle cx="1412" cy="344.500" r="28" fill="url(#stop)" stroke="#400" />
    <circle cx="1411" cy="343.500" r="24.500" fill="none" stroke="#700" strokeWidth=".8" />
    {[0, 120, 240].map((a) => (
      <g key={a} transform={`rotate(${a} 1412 344.500)`}>
        <path d="M1391.500 351A21.500 21.500 0 0 1 1400 326.500" fill="none" stroke="#500" strokeWidth="4.500" />
        <path d="M1391.500 351A21.500 21.500 0 0 1 1400 326.500" fill="none" stroke="#e83838" strokeWidth="3" />
        <path d="M1397 323l8 2-4 6z" fill="#e83838" stroke="#500" strokeWidth=".7" />
      </g>
    ))}
    <Plate x={1387.500} y={383.500} />
    <path d="M1397.500 387.500h27v13h-27zM1400 392.500h4M1419 392.500h3M1401 386.500h3M1418 386.500h3" fill="none" stroke="#fff" />
    <circle cx="1412" cy="436" r="21.500" fill="url(#lamp)" stroke="#100" strokeWidth="2.500" />
    <Plate x={1387.500} y={475.500} />
    <g fill="#fff">
      <ellipse cx="1393.500" cy="485" rx="3" ry="4" transform="rotate(20 1393.500 485)" />
      <ellipse cx="1401.500" cy="482.500" rx="3" ry="4" transform="rotate(-30 1401.500 482.500)" />
      <ellipse cx="1399" cy="490.500" rx="4.500" ry="3" />
      <text x="1408" y="490" fontFamily={sans} fontSize="8" fill="#ccc">t°C</text>
    </g>
    <path d="M1422 482q2-2 4 0t4-1M1422 486q2-2 4 0t4-1M1422 490q2-2 4 0t4-1" fill="none" stroke="#999" />
    <circle cx="1412" cy="543.500" r="42.500" fill="url(#knob)" stroke="#222" />
    {[35.500, 32, 28.500, 25, 22].map((r) => (
      <circle key={r} cx="1412" cy="543.500" r={r} fill={r === 35.500 ? "#3a3a3a" : r === 22 ? "#444" : "none"} stroke="#0c0c0c" />
    ))}
    <path d="M1407 520h10v47h-10zM1410 522v44M1414 522v44" fill="#383838" {...K} />
    <circle cx="1412" cy="525" r="1" fill="#fff" />
    <Plate x={1387.500} y={596.500} />
    <g stroke="#fff" fill="none" strokeWidth="1.200">
      <path d="M1399 607.500h25M1405 607.500l5-5h6M1408 607.500l5 5h6" />
      <circle cx="1399.500" cy="607.500" r="2" fill="#fff" />
      <path d="M1423 605.500l3 2-3 2zM1415 601h3v3h-3zM1418 611h3v3h-3z" fill="#fff" strokeWidth=".5" />
    </g>
    <path d="M1386.500 627l3-2h8l3-4h21l3 4h10l3 2v48l-3 2h-45l-3-3z" fill="#9c9c9c" {...K} />
    {[[1392, 631.500], [1432, 631.500], [1392, 671], [1432, 671]].map(([x, y]) => (
      <g key={`${x}${y}`}>
        <circle cx={x} cy={y} r="5" fill="#555" stroke="#000" strokeWidth="1.300" />
        <path d={`M${x - 4} ${y}h8`} stroke="#111" strokeWidth="1.500" />
      </g>
    ))}
    <circle cx="1412" cy="651" r="19" fill="#999" stroke="#111" strokeWidth="2" />
    <circle cx="1412" cy="651" r="14.500" fill="#222" {...K} />
    <rect x="1401.500" y="645" width="21" height="12" rx="1" fill="#999" stroke="#111" />
    <path d="M1404.500 649.500h15" stroke="#111" strokeWidth="1.500" />

    {/* centre column */}
    <Plate x={1172} y={721.500} />
    <path d="M1191 740.500a8.500 8.500 0 1 1 9 0M1204 736l-3 4h-2" fill="none" stroke="#ccc" />
    <Lamp x={1196} y={769.500} fill="#2f6200" />
    <Plate x={1172} y={797} />
    <g fill="#fff" textAnchor="middle" fontFamily={wide}>
      <text x="1195.500" y="806" fontSize="9" fill="#ccc">ENGINE</text>
      <text x="1195.500" y="817" fontSize="13">START</text>
    </g>
    <Lamp x={1196} y={846} fill="#000" />
    <Plate x={1161.500} y={872.500} w={67} h={32} />
    <circle cx="1173" cy="888" r="8.500" fill="none" stroke="#fff" strokeWidth="2" />
    <path d="M1169 886h8l-4 6z" fill="#fff" />
    <path d="M1190 895a9 9 0 1 1 10 0M1203 892l-3 4M1212 895a9 9 0 1 1 10 0q-5 3-10 0M1225 890l-3 5" fill="none" stroke="#ddd" />
    <Knob x={1196} y={930.500} />

    {/* bottom row */}
    <Plate x={1256.500} y={882.500} />
    <text x="1293" y="901" fontSize="9" fontFamily={sans} fill="#ccc" textAnchor="end">t°C</text>
    <path d="M1268 900q3-2 1-4t1-3M1272 900q3-2 1-4t1-3M1276 900q3-2 1-4t1-3" fill="none" stroke="#aaa" />
    <path d="M1269 887.500h24" stroke="#555" strokeDasharray="2 2" />
    <Lamp x={1280.500} y={930.500} fill="#2f6200" />
    <Plate x={1341} y={882.500} />
    <path d="M1347.500 885v8M1353.500 885v8M1359.500 885v8M1369.500 885v13M1375.500 885v13M1381.500 885v13" stroke="#fff" />
    <path d="M1345 900h17" stroke="#fff" strokeWidth="4" />
    <path d="M1345.500 893h4l-2 3zM1351.500 893h4l-2 3zM1357.500 893h4l-2 3zM1367.500 897h4l-2 4zM1373.500 897h4l-2 4zM1379.500 897h4l-2 4z" fill="#fff" />
    <Knob x={1365} y={930.500} />
    <Plate x={1425} y={882.500} />
    <g fill="#fff" fontFamily={wide} fontSize="11">
      <text x="1430" y="897">0</text>
      <text x="1460" y="897">I</text>
    </g>
    <path d="M1448.500 887v8M1443 900.500h11M1445 897.500h8" stroke="#888" />
    <Knob x={1449} y={930.500} />

    {/* drive controller */}
    <rect x="1251" y="736" width="217" height="143.500" rx="7" fill="#003061" stroke="#060b14" strokeWidth="2" />
    <g fontFamily={sans} fill="#05080c" stroke="#05080c" strokeWidth=".3">
      <text x="1282" y="763.500" fontSize="9">InteliDrive Lite</text>
      <text x="1417" y="763.500" fontSize="8">ComAp</text>
      <rect x="1281" y="766.500" width="156" height="46" rx="6" fill="#444" stroke="#000" />
      <rect x="1282.500" y="768" width="80" height="43" rx="5" fill="#469200" stroke="#000" strokeWidth="1.300" />
      <g fontSize="6">
        <text x="1287" y="775">OFF</text>
        <text x="1304" y="775">MAN</text>
        <text x="1323" y="775">AUT</text>
        <text x="1337" y="782.500">Running</text>
        <text x="1337" y="801">No Timer</text>
        <text x="1287" y="806">1502</text>
        <text x="1317" y="806">RPM</text>
      </g>
      <path d="M1285.500 780.500h46v26.500h-46zM1292 789q17-9 34 0M1292 789l2-4M1301 785l-1-3M1309 784v-3M1317 785l1-3M1326 789l-1-4M1310 800l15-10" fill="none" strokeWidth="1.300" />
      <Key x={1374} y={772.500}><text x="5" y="6.500" fontSize="5">Hold</text>{arrow}</Key>
      <Key x={1395} y={772.500}><text x="4" y="6.500" fontSize="5">Hold</text><g transform="matrix(-1 0 0 1 18 0)">{arrow}</g></Key>
      <Key x={1416} y={772.500} fill="#5cb800"><text x="3.500" y="7" fontSize="5">Start</text><text x="8" y="13" fontSize="5">I</text></Key>
      <Key x={1374} y={791}><path d="M4 7h3v3H4zM7 6v5M10 6v5M12 5q3 3 0 6" fill="none" strokeWidth="1.300" /></Key>
      <Key x={1395} y={791} fill="#f4f4f4"><path d="M9 3v10M6 6h6M6 10h6M7 5l4 6" strokeWidth="1.300" /></Key>
      <Key x={1416} y={791} fill="#c00000"><text x="4" y="7" fontSize="5">Stop</text><text x="7" y="13" fontSize="5">0</text></Key>
      <rect x="1302.500" y="825" width="46" height="41" rx="6" fill="#444" stroke="#000" />
      <Key x={1306} y={828}><path d="M9 12V5M7 7l2-2 2 2" fill="none" stroke="#fff" strokeWidth="1.200" /></Key>
      <Key x={1327} y={828}><text x="3.500" y="6.500" fontSize="5">Page</text><path d="M6 8h5v4H6zM8 10h5v4H8z" fill="none" /></Key>
      <Key x={1306} y={847}><path d="M9 5v7M7 10l2 2 2-2" fill="none" stroke="#fff" strokeWidth="1.200" /></Key>
      <Key x={1327} y={847} fill="#f4f4f4"><text x="3" y="6" fontSize="5">Enter</text><path d="M4 10.500h11V8M7 8l-3 2.500L7 13z" fill="#003264" stroke="#003264" strokeWidth="1.500" /></Key>
      <g strokeWidth="1.500" stroke="#000">
        <circle cx="1362.500" cy="836.500" r="3" fill="#2f6200" />
        <circle cx="1362.500" cy="845.500" r="3" fill="#ffe600" />
        <circle cx="1362.500" cy="854.500" r="3" fill="#b00000" />
        <circle cx="1415" cy="836.500" r="3" fill="#2f6200" />
      </g>
      <g fontSize="4">
        <text x="1371" y="838">RUNNING</text>
        <text x="1371" y="847">WARNING</text>
        <text x="1371" y="856">SHUTDOWN</text>
        <text x="1422" y="838">I/O</text>
      </g>
      <rect x="1415.500" y="846.500" width="19" height="16" rx="3" fill="#f4f4f4" stroke="#222" />
      <text x="1420" y="857.500" fontSize="8">I/O</text>
      <text transform="translate(1451 859) rotate(-90)" fontSize="8">LITE</text>
      <path d="M1443.500 862h8v16h-8z" fill="#fff" />
    </g>

    {/* orientation triad */}
    <g fontFamily={'"Liberation Mono", "Courier New", monospace'} fontSize="13">
      <text x="547" y="947" fill="#4a72cf" stroke="#4a72cf" strokeWidth=".3">Z</text>
      <text x="498.500" y="1011" fill="#c8503c" stroke="#c8503c" strokeWidth=".3">X</text>
      <text x="506" y="1011" fill="#3fae5c">Y</text>
    </g>
    <path d="M551.500 1002V965" stroke="#3d6f8c" strokeWidth="5" />
    <path d="M551.500 1002V965" stroke="#6fc3ee" strokeWidth="3" />
    <path d="M551.500 952l4.500 15h-9z" fill="#5a90e0" />
    <path d="M546 1006.500H524" stroke="#4d5a1c" strokeWidth="5" />
    <path d="M511 1006.500l13-5v10z" fill="#b5544a" />
    <path d="M517 1006.500l9-5 5 5-5 5z" fill="#2f9a2f" />
    <circle cx="551.500" cy="1006.500" r="6.500" fill="#dcdc4a" stroke="#a5a532" strokeWidth=".8" />
    <circle cx="549.500" cy="1004" r="2" fill="#f6f6b0" />
  </Canvas>
);

/* ---------- page ---------- */

const menus = ["Файл", "Правка", "Выделить", "Вид", "Эскиз", "Моделирование", "Сборка", "Оформление", "Диагностика", "Управление", "Настройка", "Приложения", "Окно", "Справка"];

export default function App() {
  return (
    <Shell>
      <Global />
      <MenuBar>
        <Logo width="20" height="20" viewBox="0 0 20 20" fill="none" stroke="#35b4e8">
          <path d="M.5.5h19v19H.500z" fill="#12344a" strokeWidth="1.500" />
          <circle cx="10" cy="10" r="7.500" strokeWidth="1.200" />
          <path d="M7 4v12M7 10l7-6M8 9l6 7M3 6l4 5" strokeWidth="1.300" />
        </Logo>
        <Menu>{menus.map((m) => <button key={m}>{m}</button>)}</Menu>
        <Spacer />
        <WinTools>
          <button aria-label="Окно"><Icon name="win" /></button>
          <button aria-label="Настройка окна"><Icon name="wingear" /></button>
        </WinTools>
        <CommandSearch>
          <Icon name="search" size={14} />
          <SearchInput placeholder="Поиск по командам (Alt+/)" aria-label="Поиск по командам" />
        </CommandSearch>
        <WinButtons>
          <button aria-label="Свернуть"><Icon name="minus" /></button>
          <button aria-label="Восстановить"><Icon name="restore" /></button>
          <button aria-label="Закрыть"><Icon name="close" /></button>
        </WinButtons>
      </MenuBar>
      <TabBar>
        <HomeTab aria-label="Стартовая страница"><Icon name="home" /><Caret /></HomeTab>
        <DocTab>
          <Icon name="asm" />
          <span>170-04.50.300-Кресл...</span>
          <button aria-label="Закрыть вкладку"><Icon name="closetab" /></button>
        </DocTab>
      </TabBar>
      <Ribbon>
        <Group $w={121}>
          <GroupBody $col={120} $pad={0}>
            <ModeButton $on><Icon name="asm" />Сборка</ModeButton>
            <ModeButton><Icon name="doc" />Управление</ModeButton>
            <ModeButton><Icon name="solid" />{"Твердотельное\nмоделирование"}</ModeButton>
          </GroupBody>
          <GroupFoot as="div"><Icon name="more" size={14} /></GroupFoot>
        </Group>
        {groups.map((g) => <RibbonGroup key={g.title} g={g} />)}
      </Ribbon>
      <Main>
        <Rail>
          <Square $on aria-label="Дерево"><Icon name="tree" /></Square>
          <Square aria-label="Параметры"><Icon name="list" /></Square>
          <Square aria-label="Переменные"><Icon name="fx" /></Square>
          <Square aria-label="Слои"><Icon name="menu" /></Square>
          <Square aria-label="Состав"><Icon name="treeadd" /></Square>
        </Rail>
        <Panel>
          <PanelHead>
            Дерево: структура
            <button aria-label="Настройка панели"><Icon name="gear" size={14} /></button>
          </PanelHead>
          <PanelTools>
            <Square aria-label="Нумерация"><Icon name="numtree" /></Square>
            <Square $on aria-label="Структура"><Icon name="tree" /></Square>
            <Square aria-label="Исполнения"><Icon name="clips" /></Square>
            <Square $w={27} aria-label="Область"><Icon name="marquee" /></Square>
            <Square $w={28} aria-label="Состав дерева"><Icon name="checks" /></Square>
            <CaretCell aria-label="Ещё"><Caret /></CaretCell>
          </PanelTools>
          <FilterRow>
            <Square aria-label="Фильтр"><Icon name="funnel" /></Square>
            <FilterInput>
              <Icon name="search" size={12} />
              <SearchInput placeholder="Поиск (Ctrl+/)" aria-label="Поиск в дереве" />
            </FilterInput>
          </FilterRow>
          <TreeWrap>
            <Tree>
              {tree.map(([level, icon, pin, text, open, noMark], i) => (
                <Row key={i}>
                  <Mark aria-label="Видимость"><Icon name="eye" size={15} /></Mark>
                  <Mark aria-label="Включение">{!noMark && <Icon name="include" size={15} />}</Mark>
                  <Node $level={level}>
                    <Twist $open={open} aria-label="Раскрыть" />
                    <Icon name={icon} />
                    {pin && <Pin><Icon name="pin" size={13} /></Pin>}
                    <span>{text}</span>
                  </Node>
                </Row>
              ))}
            </Tree>
            <Scroll />
          </TreeWrap>
          <Switcher>
            <Square $on aria-label="Структура"><Icon name="tree" /></Square>
            <Square aria-label="Список"><Icon name="list" /></Square>
          </Switcher>
        </Panel>
        <Viewport>
          <Model />
          <ViewBar>
            <Handle />
            {viewTools.map((tools, gi) => (
              <ViewGroup key={gi}>
                {tools.map((t, i) => {
                  if (t === "v") return <CaretCell key={i} aria-label="Ещё"><Caret /></CaretCell>;
                  if (t === "V") return <DarkCaret key={i} aria-label="Ещё"><Caret /></DarkCaret>;
                  const name = t.replace(/^[*-]/, "");
                  return (
                    <Square key={i} $w={27} $on={t[0] === "*"} disabled={t[0] === "-"} aria-label={name}>
                      <Icon name={name} />
                    </Square>
                  );
                })}
              </ViewGroup>
            ))}
          </ViewBar>
        </Viewport>
      </Main>
    </Shell>
  );
}
